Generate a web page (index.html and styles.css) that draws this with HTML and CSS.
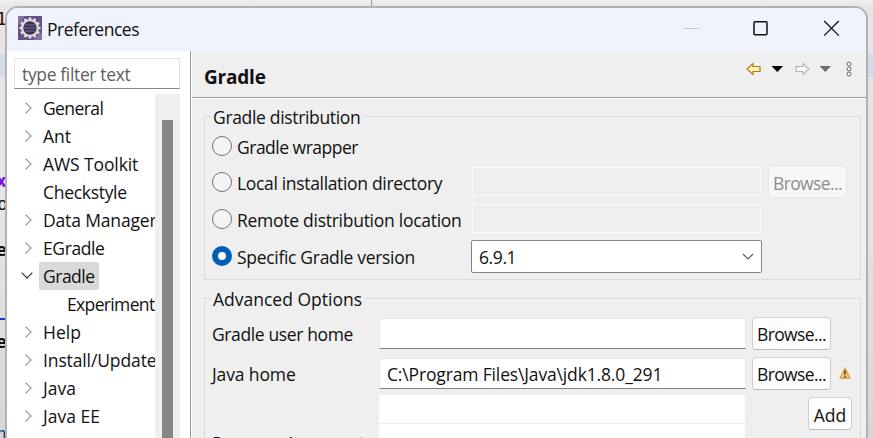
FILE: index.html
```html
<!DOCTYPE html>
<html lang="en">
<head>
<meta charset="utf-8">
<title>Preferences</title>
<link rel="stylesheet" href="styles.css">
</head>
<body>
<div class="backdrop">
  <div class="band"></div><div class="split"></div>
  <span class="code c1">1</span><span class="code c2">x</span><span class="code c3">o</span><span class="code c4">e</span><i class="under"></i><span class="code c5">e</span><span class="code c6">n</span>
</div>
<main class="window">
  <header class="titlebar">
    <svg class="logo" viewBox="0 0 24 24"><rect width="24" height="24" fill="#66508a"/><path d="M0 0h7L0 9zM24 24h-9l9-8z" fill="#8474a4"/><path d="M12 1.5v21M1.5 12h21M6.75 2.9l10.5 18.2M17.25 2.9L6.75 21.1M2.9 6.75l18.2 10.5M21.1 6.75L2.9 17.25" stroke="#e6e3dd" stroke-width="2.6"/><circle cx="12" cy="12" r="7.8" fill="#3b3058" stroke="#dedad5" stroke-width="2.2"/><path d="M7 9h10M6 12h12M7 15h10" stroke="#625c80" stroke-width="1.5"/></svg>
    <span class="title">Preferences</span>
    <svg class="controls" viewBox="0 0 160 20" fill="none"><path d="M0 10.5h15" stroke="#c5c7cd"/><rect x="70" y="3.8" width="13" height="13" rx="1" stroke="#111" stroke-width="1.5"/><path d="M140.2 3l14.6 14.6M154.8 3l-14.6 14.6" stroke="#111" stroke-width="1.3"/></svg>
  </header>
  <div class="content">
    <aside class="side">
      <div class="filter"><span class="w-filter">type filter text</span></div>
      <div class="tree-area">
        <ul class="tree">
          <li><i class="chev"></i><span class="w-general">General</span></li>
          <li><i class="chev"></i><span class="w-ant">Ant</span></li>
          <li><i class="chev"></i><span class="w-aws">AWS Toolkit</span></li>
          <li><i class="none"></i><span class="w-check">Checkstyle</span></li>
          <li><i class="chev"></i><span class="w-data">Data Manager</span></li>
          <li><i class="chev"></i><span class="w-egradle">EGradle</span></li>
          <li class="open"><i class="chev"></i><span class="selected w-gradle">Gradle</span></li>
          <li class="child"><i class="none"></i><span class="w-exp">Experiment</span></li>
          <li><i class="chev"></i><span class="w-help">Help</span></li>
          <li><i class="chev"></i><span class="w-install">Install/Update</span></li>
          <li><i class="chev"></i><span class="w-java">Java</span></li>
          <li><i class="chev"></i><span class="w-javaee">Java EE</span></li>
        </ul>
        <div class="scroll"><div class="thumb"></div></div>
      </div>
    </aside>
    <section class="page">
      <div class="page-head">
        <h1>Gradle</h1>
        <svg class="nav" viewBox="0 0 108 18"><path d="M1 9l6-5.5v3h7v5H7v3z" fill="#fff2b8" stroke="#b9770e" stroke-width="1.2"/><path d="M25.5 6h11.5l-5.7 6z" fill="#000"/><path d="M63 9l-6-5.5v3h-7v5h7v3z" fill="#f7f7f7" stroke="#b4b4b4" stroke-width="1.2"/><path d="M73.5 6h11.5l-5.7 6z" fill="#6e6e6e"/><g fill="#fff" stroke="#666"><circle cx="103" cy="4" r="2"/><circle cx="103" cy="9" r="2"/><circle cx="103" cy="14" r="2"/></g></svg>
      </div>
      <fieldset class="dist">
        <legend><span class="w-dist">Gradle distribution</span></legend>
        <div class="row r1"><i class="radio"></i><label class="w-wrapper">Gradle wrapper</label></div>
        <div class="row r2"><i class="radio"></i><label class="w-local">Local installation directory</label><div class="input off"></div><button class="off-btn" disabled><span class="w-browse">Browse...</span></button></div>
        <div class="row r3"><i class="radio"></i><label class="w-remote">Remote distribution location</label><div class="input off"></div></div>
        <div class="row r4"><i class="radio on"></i><label class="w-specific">Specific Gradle version</label><div class="combo"><span class="w-num">6.9.1</span><svg viewBox="0 0 12 8"><path d="M1 1l5 5 5-5" fill="none" stroke="#5c5c5c" stroke-width="1.2"/></svg></div></div>
      </fieldset>
      <fieldset class="adv">
        <legend><span class="w-adv">Advanced Options</span></legend>
        <div class="arow"><label class="w-user">Gradle user home</label><div class="input"></div><button><span class="w-browse">Browse...</span></button></div>
        <div class="arow"><label class="w-jhome">Java home</label><div class="input"><span class="w-path">C:\Program Files\Java\jdk1.8.0_291</span></div><button><span class="w-browse">Browse...</span></button>
          <svg class="warn" viewBox="0 0 12 13"><path d="M6 1.6L10.6 11H1.4z" fill="#f8d58a" stroke="#e0a850" stroke-width="2" stroke-linejoin="round"/><path d="M6 3.6v3.8M6 8.6v1.8" stroke="#563d16" stroke-width="1.5"/></svg></div>
        <div class="args"><label class="w-args">Program Arguments</label><div class="table"><div></div><div></div></div><button class="add"><span class="w-add">Add</span></button></div>
      </fieldset>
    </section>
  </div>
</main>
</body>
</html>
```
FILE: styles.css
```css
* { box-sizing: border-box; }
html, body { margin: 0; width: 873px; height: 438px; overflow: hidden; }
body { position: relative; font: 17.5px/24px "Open Sans", "Noto Sans", sans-serif; color: #111; background: #e4e4e4; }
ul { list-style: none; margin: 0; padding: 0; }
span, label { white-space: nowrap; }

.backdrop { position: absolute; inset: 0; background: linear-gradient(#f0f0f0, #e6e6e6 6px, #e6e6e6 200px, #d6d6d6); }
.band { position: absolute; top: 54px; left: 0; right: 0; height: 23px; background: #d3dbe7; }
.split { position: absolute; left: 371px; top: 0; width: 1px; height: 8px; background: #9a9a9a; }
.code { position: absolute; font: 18px/20px "DejaVu Sans Mono", monospace; }
.c1 { left: -4px; top: 9px; color: #301010; }
.c2 { left: -4px; top: 171px; color: #7a0be0; font-weight: bold; }
.c3 { left: -3px; top: 194px; }
.c4 { left: -4px; top: 240px; font-weight: bold; }
.c5 { left: -4px; top: 332px; font-weight: bold; }
.c6 { left: -4px; top: 424px; color: #0a3c86; }
.under { position: absolute; left: 0; top: 318px; width: 5px; height: 2px; background: #1238cc; }

.window { position: relative; margin: 6px 0 0 5px; width: 863px; height: 450px; border: 2px solid #b2b2b2; border-radius: 13px 13px 0 0; overflow: hidden; background: #efefef; }
.titlebar { display: flex; align-items: center; height: 43px; padding: 0 27px 3px 11px; background: #eff3fb; }
.logo { width: 24px; height: 24px; margin-right: 5px; }
.title { padding-top: 1px; letter-spacing: -.5px; }
.controls { width: 160px; height: 20px; margin-left: auto; margin-right: -5px; }
.content { display: flex; height: 405px; }

.side { width: 184px; padding: 7px 10px 0 7px; background: #fff; border-right: 1px solid #9a9a9a; display: flex; flex-direction: column; flex: none; }
.filter { height: 31px; border: 1px solid #e2e2e2; border-bottom-color: #868686; padding: 3px 7px; color: #606060; }
.tree-area { display: flex; flex: 1; margin-top: 5px; min-height: 0; }
.tree { width: 141px; overflow: hidden; flex: none; }
.tree li { display: flex; align-items: center; height: 28px; }
.tree li span { display: block; height: 28px; line-height: 28px; margin-left: 3px; padding-left: 4px; }
.chev, .none { width: 22px; height: 10px; flex: none; display: flex; justify-content: center; align-items: center; padding-left: 3px; }
.chev::before { content: ""; width: 8px; height: 8px; box-sizing: content-box; width: 7px; height: 7px; border: solid #8c8c8c; border-width: 1.8px 1.8px 0 0; transform: translateX(-1px) rotate(45deg); }
.open .chev::before { border-color: #222; transform: translate(0, -3px) rotate(135deg); }
.child { padding-left: 24px; }
.tree li .selected { background: #d9d9d9; padding-right: 4px; border-radius: 2px; }
.scroll { width: 25px; background: #efefef; padding: 26px 7px 0; }
.thumb { width: 11px; height: 100%; background: #868686; }

.page { flex: 1; border-left: 1px solid #fff; padding: 0 5px 0 12px; }
.page-head { display: flex; justify-content: space-between; height: 48px; margin: 0 -5px 0 -12px; padding: 9px 12px 0 12px; border-bottom: 1px solid #fff; box-shadow: inset 0 -1px #9c9c9c; }
h1 { margin: 0; padding-top: 5px; font-size: 19px; line-height: 24px; font-weight: 700; letter-spacing: -.2px; }
.nav { width: 108px; height: 18px; }
fieldset { min-width: 0; width: 657px; margin: 0; padding: 0; border: 1px solid #dadada; }
legend { padding: 0 3px 0 2px; margin-left: 6px; height: 23px; line-height: 25px; }
.dist { margin-top: 6px; height: 175px; }
.row { display: flex; align-items: center; padding-left: 7px; }
.r1 { height: 36px; } .r2 { height: 35px; } .r3 { height: 39px; } .r4 { height: 36px; }
.radio { width: 20px; height: 20px; flex: none; border: 1px solid #717171; border-radius: 50%; background: #f4f4f4; margin-right: 5px; }
.radio.on { border: 6px solid #005fb8; background: #fff; }
.row label { width: 235px; padding-top: 2px; flex: none; }
.input { height: 31px; background: #fff; border: 1px solid #e8e8e8; border-bottom-color: #808080; }
.input.off { width: 289px; height: 29px; border: 1px solid #fafafa; background: #efefef; flex: none; }
.row .combo { width: 291px; height: 33px; margin-left: -1px; border: 1px solid #858585; border-radius: 2px; background: #fff; display: flex; align-items: center; justify-content: space-between; padding: 0 7px; }
.combo span { padding-top: 1px; }
.combo svg { width: 12px; height: 8px; margin-top: 1px; }
button { width: 79px; height: 33px; padding: 0; font: inherit; color: #111; border: 1px solid #cecece; border-bottom-color: #bcbcbc; border-radius: 4px; background: #fdfdfd; display: flex; align-items: center; justify-content: center; }
.off-btn { margin-left: 7px; background: #f7f7f7; color: #8d8d8d; border-color: #e8e8e8; }
button span { padding-top: 2px; }
.adv { margin-top: 7px; height: 200px; border-bottom: 0; }
.arow { display: flex; align-items: center; height: 40px; padding: 6px 0 0 7px; }
.arow label { width: 167px; flex: none; padding-top: 2px; }
.arow .input { width: 367px; margin-right: 6px; padding: 3px 7px; }
.warn { width: 12px; height: 13px; margin-left: 8px; }
.args { display: flex; padding: 5px 0 0 7px; }
.args label { width: 167px; padding-top: 36px; }
.table { width: 366px; height: 60px; background: #fff; }
.table div { height: 29px; border-bottom: 1px solid #ededed; }
.add { width: 44px; margin: 2px 0 0 63px; }

/* tracking of the individual labels */
.w-filter { letter-spacing: -.35px; }
.w-general { letter-spacing: -.6px; }
.w-aws { letter-spacing: -.1px; }
.w-check { letter-spacing: -.3px; }
.w-data { letter-spacing: -.15px; }
.w-egradle { letter-spacing: -.4px; }
.w-gradle { letter-spacing: -.5px; }
.w-exp { letter-spacing: -.65px; }
.w-install { letter-spacing: -.12px; }
.w-dist { letter-spacing: -.33px; }
.w-wrapper { letter-spacing: -.5px; }
.w-local { letter-spacing: -.33px; }
.w-remote { letter-spacing: -.27px; }
.w-specific { letter-spacing: -.31px; }
.w-num { letter-spacing: -.4px; }
.w-user { letter-spacing: -.38px; }
.w-jhome { letter-spacing: -.12px; }
.w-path { letter-spacing: -.15px; }
.w-browse { letter-spacing: -.6px; }
.w-args { letter-spacing: -.25px; }
```
